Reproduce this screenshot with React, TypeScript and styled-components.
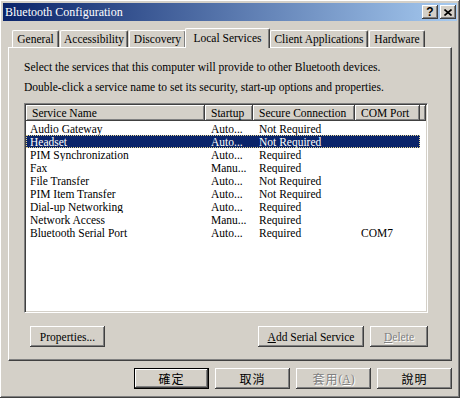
import React from 'react';
import styled, { createGlobalStyle, css } from 'styled-components';

const GlobalStyle = createGlobalStyle`
  html, body { margin: 0; padding: 0; background: #d4d0c8; }
  body {
    font-family: "Liberation Serif", "Noto Sans CJK TC", serif;
    font-size: 11.5px;
    color: #000;
  }
`;

const raised = css`
  box-shadow: inset -1px -1px #404040, inset 1px 1px #ffffff,
    inset -2px -2px #808080, inset 2px 2px #d4d0c8;
`;

const Window = styled.div`
  width: 460px;
  height: 398px;
  box-sizing: border-box;
  padding: 3px;
  background: #d4d0c8;
  ${raised};
  display: flex;
  flex-direction: column;
`;

const TitleBar = styled.div`
  height: 18px;
  display: flex;
  align-items: center;
  padding: 0 1px 0 2px;
  background: linear-gradient(to right, #0a246a, #a6caf0);
`;

const Title = styled.span`
  flex: 1;
  color: #fff;
  font-size: 12px;
  line-height: 18px;
`;

const CaptionButton = styled.div`
  width: 16px;
  height: 14px;
  margin-left: 2px;
  background: #d4d0c8;
  ${raised};
  display: flex;
  align-items: center;
  justify-content: center;
  font-family: "Liberation Sans", sans-serif;
  font-weight: bold;
  font-size: 12px;
  line-height: 14px;
`;

const Body = styled.div`
  padding: 0 5px;
  display: flex;
  flex-direction: column;
`;

const TabStrip = styled.div`
  margin-top: 7px;
  height: 19px;
  padding-left: 4px;
  display: flex;
  align-items: flex-end;
`;

const Tab = styled.div<{ $w: number; $active?: boolean }>`
  box-sizing: border-box;
  width: ${(p) => p.$w}px;
  height: ${(p) => (p.$active ? 20 : 17)}px;
  margin: ${(p) => (p.$active ? '0 0 -1px -2px' : '0 1px 0 0')};
  position: relative;
  z-index: ${(p) => (p.$active ? 2 : 1)};
  background: #d4d0c8;
  border-top: 1px solid #fff;
  border-left: 1px solid #fff;
  border-right: 1px solid #404040;
  border-radius: 2px 2px 0 0;
  box-shadow: inset -1px 0 #808080;
  display: flex;
  justify-content: center;
  align-items: ${(p) => (p.$active ? 'flex-start' : 'center')};
  padding-top: ${(p) => (p.$active ? 2 : 0)}px;
  white-space: nowrap;
  line-height: 14px;
`;

const Panel = styled.div`
  box-sizing: border-box;
  height: 314px;
  border-top: 1px solid #fff;
  border-left: 1px solid #fff;
  border-right: 1px solid #404040;
  border-bottom: 1px solid #404040;
  box-shadow: inset -1px -1px #808080;
  padding: 7px 0 0 15px;
  display: flex;
  flex-direction: column;
`;

const Para = styled.p<{ $gap?: number }>`
  margin: ${(p) => p.$gap ?? 0}px 0 0 0;
  line-height: 13px;
  white-space: nowrap;
`;

const ListBox = styled.div`
  box-sizing: border-box;
  margin-top: 9px;
  width: 404px;
  height: 210px;
  background: #fff;
  border-top: 1px solid #808080;
  border-left: 1px solid #808080;
  border-right: 1px solid #fff;
  border-bottom: 1px solid #fff;
  box-shadow: inset 1px 1px #404040, inset -1px -1px #d4d0c8;
  padding: 1px;
  display: flex;
  flex-direction: column;
`;

const HeaderBar = styled.div`
  display: flex;
  height: 16px;
  margin-bottom: 1px;
  background: #d4d0c8;
  ${raised};
`;

const cols = [179, 48, 102, 65];

const HeaderCell = styled.div<{ $w: number }>`
  box-sizing: border-box;
  width: ${(p) => p.$w}px;
  height: 16px;
  padding-left: 6px;
  line-height: 16px;
  white-space: nowrap;
  overflow: hidden;
  ${raised};
`;

const Row = styled.div<{ $sel?: boolean }>`
  display: flex;
  width: 394px;
  height: 13px;
  line-height: 14px;
  ${(p) =>
    p.$sel &&
    css`
      background: #0a246a;
      color: #fff;
      outline: 1px dotted #e8d890;
      outline-offset: -1px;
    `}
`;

const Cell = styled.div<{ $w: number; $first?: boolean }>`
  width: ${(p) => p.$w}px;
  padding-left: ${(p) => (p.$first ? 4 : 6)}px;
  box-sizing: border-box;
  white-space: nowrap;
  overflow: hidden;
`;

const ButtonRow = styled.div`
  width: 404px;
  margin-top: 13px;
  display: flex;
  gap: 6px;
`;

const Button = styled.div<{ $w: number; $disabled?: boolean; $default?: boolean }>`
  box-sizing: border-box;
  width: ${(p) => p.$w}px;
  height: 21px;
  background: #d4d0c8;
  display: flex;
  align-items: center;
  justify-content: center;
  white-space: nowrap;
  ${(p) =>
    p.$default
      ? css`
          box-shadow: inset 0 0 0 1px #000, inset -2px -2px #404040,
            inset 2px 2px #ffffff, inset -3px -3px #808080;
        `
      : raised};
  ${(p) =>
    p.$disabled &&
    css`
      color: #808080;
      text-shadow: 1px 1px #fff;
    `}
`;

const CjkLabel = styled.span`
  font-family: "Noto Sans CJK TC", sans-serif;
  font-size: 12px;
  letter-spacing: 1px;
`;

const Spacer = styled.div`
  flex: 1;
`;

const Footer = styled.div`
  margin-top: 7px;
  display: flex;
  justify-content: flex-end;
  gap: 6px;
`;

const tabs = [
  { label: 'General', w: 47 },
  { label: 'Accessibility', w: 68 },
  { label: 'Discovery', w: 57 },
  { label: 'Local Services', w: 85, active: true },
  { label: 'Client Applications', w: 98 },
  { label: 'Hardware', w: 56 },
];

const services = [
  ['Audio Gateway', 'Auto...', 'Not Required', ''],
  ['Headset', 'Auto...', 'Not Required', ''],
  ['PIM Synchronization', 'Auto...', 'Required', ''],
  ['Fax', 'Manu...', 'Required', ''],
  ['File Transfer', 'Auto...', 'Not Required', ''],
  ['PIM Item Transfer', 'Auto...', 'Not Required', ''],
  ['Dial-up Networking', 'Auto...', 'Required', ''],
  ['Network Access', 'Manu...', 'Required', ''],
  ['Bluetooth Serial Port', 'Auto...', 'Required', 'COM7'],
];

export default function App() {
  return (
    <>
      <GlobalStyle />
      <Window>
        <TitleBar>
          <Title>Bluetooth Configuration</Title>
          <CaptionButton>?</CaptionButton>
          <CaptionButton>
            <svg width="8" height="7" viewBox="0 0 8 7">
              <path d="M0.5 0.5 L7.5 6.5 M7.5 0.5 L0.5 6.5" stroke="#000" strokeWidth="1.6" />
            </svg>
          </CaptionButton>
        </TitleBar>
        <Body>
          <TabStrip>
            {tabs.map((t) => (
              <Tab key={t.label} $w={t.w} $active={t.active}>
                {t.label}
              </Tab>
            ))}
          </TabStrip>
          <Panel>
            <Para $gap={6}>
              Select the services that this computer will provide to other Bluetooth devices.
            </Para>
            <Para $gap={7}>
              Double-click a service name to set its security, start-up options and properties.
            </Para>
            <ListBox>
              <HeaderBar>
                <HeaderCell $w={cols[0]}>Service Name</HeaderCell>
                <HeaderCell $w={cols[1]}>Startup</HeaderCell>
                <HeaderCell $w={cols[2]}>Secure Connection</HeaderCell>
                <HeaderCell $w={cols[3]}>COM Port</HeaderCell>
              </HeaderBar>
              {services.map((s, i) => (
                <Row key={s[0]} $sel={i === 1}>
                  {s.map((v, j) => (
                    <Cell key={j} $w={cols[j]} $first={j === 0}>
                      {v}
                    </Cell>
                  ))}
                </Row>
              ))}
            </ListBox>
            <ButtonRow>
              <Button $w={75} style={{ marginLeft: 6 }}>Properties...</Button>
              <Spacer />
              <Button $w={106}>
                <u>A</u>dd Serial Service
              </Button>
              <Button $w={58} $disabled>
                <u>D</u>elete
              </Button>
            </ButtonRow>
          </Panel>
          <Footer>
            <Button $w={75} $default>
              <CjkLabel>確定</CjkLabel>
            </Button>
            <Button $w={75}>
              <CjkLabel>取消</CjkLabel>
            </Button>
            <Button $w={75} $disabled>
              <CjkLabel>套用</CjkLabel>(<u>A</u>)
            </Button>
            <Button $w={75}>
              <CjkLabel>說明</CjkLabel>
            </Button>
          </Footer>
        </Body>
      </Window>
    </>
  );
}
